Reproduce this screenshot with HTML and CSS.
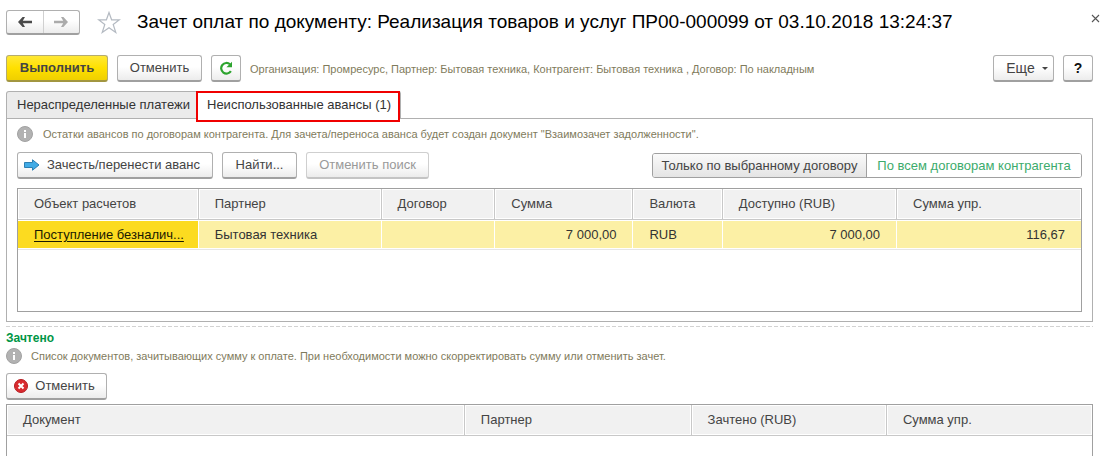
FILE: index.html
```html
<!DOCTYPE html>
<html lang="ru">
<head>
<meta charset="utf-8">
<title>Зачет оплат по документу</title>
<link rel="stylesheet" href="styles.css">
</head>
<body>
<main class="page">
  <header class="titlebar">
    <div class="nav">
      <button class="nav-btn" type="button" aria-label="Назад">
        <svg width="14" height="10" viewBox="0 0 14 10"><path d="M0 5 4.6 0H7L4.8 3.8H14V6.2H4.8L7 10H4.6Z" fill="#4a4a4a"/></svg>
      </button>
      <button class="nav-btn" type="button" aria-label="Вперед">
        <svg width="14" height="10" viewBox="0 0 14 10"><path d="M14 5 9.4 0H7L9.2 3.8H0V6.2H9.2L7 10H9.4Z" fill="#ababab"/></svg>
      </button>
    </div>
    <button class="plain star" type="button" aria-label="В избранное">
      <svg width="24" height="23" viewBox="0 0 24 23"><path d="M12 1.5 14.6 8.8H22.4L16.2 13.4 18.8 21.5 12 16.8 5.2 21.5 7.8 13.4 1.6 8.8H9.4Z" fill="#fff" stroke="#b4bac2" stroke-width="1.2"/></svg>
    </button>
    <h1 class="title">Зачет оплат по документу: Реализация товаров и услуг ПР00-000099 от 03.10.2018 13:24:37</h1>
    <button class="plain close" type="button" aria-label="Закрыть">
      <svg width="9" height="9" viewBox="0 0 9 9"><path d="M1 1 8 8M8 1 1 8" stroke="#555" stroke-width="1.1" fill="none"/></svg>
    </button>
  </header>

  <div class="toolbar">
    <button class="btn primary" type="button">Выполнить</button>
    <button class="btn cancel" type="button">Отменить</button>
    <button class="btn square" type="button" aria-label="Обновить">
      <svg width="14" height="14" viewBox="0 0 14 14"><path d="M11.9 10.2A5.3 5.3 0 1 1 11 3.3" fill="none" stroke="#2da42f" stroke-width="2.2"/><path d="M13 0.8V6.2H7.4Z" fill="#2da42f"/></svg>
    </button>
    <p class="note grow">Организация: Промресурс, Партнер: Бытовая техника, Контрагент: Бытовая техника , Договор: По накладным</p>
    <button class="btn more" type="button">Еще
      <svg width="6" height="3" viewBox="0 0 6 3"><path d="M0 0H6L3 3Z" fill="#444"/></svg>
    </button>
    <button class="btn square help" type="button">?</button>
  </div>

  <div class="tabs" role="tablist">
    <button class="tab" type="button" role="tab" aria-selected="false">Нераспределенные платежи</button>
    <button class="tab active" type="button" role="tab" aria-selected="true">Неиспользованные авансы (1)</button>
  </div>

  <section class="panel">
    <div class="hint">
      <svg width="16" height="16" viewBox="0 0 16 16"><circle cx="8" cy="8" r="7.5" fill="#b2b2b2" stroke="#a2a2a2"/><path d="M7 4H9V6H7ZM7 7H9V12H7Z" fill="#fff"/></svg>
      <p class="note">Остатки авансов по договорам контрагента. Для зачета/переноса аванса будет создан документ "Взаимозачет задолженности".</p>
    </div>
    <div class="commands">
      <button class="btn transfer" type="button">
        <svg width="16" height="12" viewBox="0 0 16 12"><path d="M0.5 3.5H8.5V0.8L15 6 8.5 11.2V8.5H0.5Z" fill="#41abe6" stroke="#2c7fb2"/></svg>
        Зачесть/перенести аванс
      </button>
      <button class="btn find" type="button">Найти...</button>
      <button class="btn reset" type="button" disabled>Отменить поиск</button>
      <div class="switch">
        <button class="option on" type="button" aria-pressed="true">Только по выбранному договору</button>
        <button class="option" type="button" aria-pressed="false">По всем договорам контрагента</button>
      </div>
    </div>
    <div class="grid-box advances">
      <table class="grid">
        <colgroup><col class="a1"><col class="a2"><col class="a3"><col class="a4"><col class="a5"><col class="a6"><col></colgroup>
        <thead>
          <tr><th>Объект расчетов</th><th>Партнер</th><th>Договор</th><th>Сумма</th><th>Валюта</th><th>Доступно (RUB)</th><th>Сумма упр.</th></tr>
        </thead>
        <tbody>
          <tr><td class="current"><a href="#">Поступление безналич...</a></td><td>Бытовая техника</td><td></td><td class="num">7 000,00</td><td>RUB</td><td class="num">7 000,00</td><td class="num">116,67</td></tr>
        </tbody>
      </table>
    </div>
  </section>

  <section class="offset">
    <svg class="divider" width="100%" height="1"><line x1="0" y1="0.5" x2="100%" y2="0.5" stroke="#d2d2d2" stroke-dasharray="4 2"/></svg>
    <h2 class="subtitle">Зачтено</h2>
    <div class="hint">
      <svg width="16" height="16" viewBox="0 0 16 16"><circle cx="8" cy="8" r="7.5" fill="#b2b2b2" stroke="#a2a2a2"/><path d="M7 4H9V6H7ZM7 7H9V12H7Z" fill="#fff"/></svg>
      <p class="note">Список документов, зачитывающих сумму к оплате. При необходимости можно скорректировать сумму или отменить зачет.</p>
    </div>
    <button class="btn undo" type="button">
      <svg width="14" height="14" viewBox="0 0 14 14"><circle cx="7" cy="7" r="6.5" fill="#d92b2f" stroke="#b51d22"/><path d="M4.5 4.5 9.5 9.5M9.5 4.5 4.5 9.5" stroke="#fff" stroke-width="2"/></svg>
      Отменить
    </button>
    <div class="grid-box documents">
      <table class="grid">
        <colgroup><col class="d1"><col class="d2"><col class="d3"><col></colgroup>
        <thead>
          <tr><th>Документ</th><th>Партнер</th><th>Зачтено (RUB)</th><th>Сумма упр.</th></tr>
        </thead>
      </table>
    </div>
  </section>
</main>
</body>
</html>
```
FILE: styles.css
```css
* { box-sizing: border-box; }

body {
  margin: 0;
  background: #fff;
  color: #444;
  font: 13px/16px "Liberation Sans", Arial, sans-serif;
}

button { font: inherit; color: inherit; margin: 0; cursor: pointer; }
svg { display: block; flex: none; }
p, h1, h2 { margin: 0; }

.page {
  display: flex;
  flex-direction: column;
  min-height: 100vh;
  padding: 9px 13px 0 6px;
}

.titlebar { display: flex; align-items: center; height: 26px; }

.nav {
  display: flex;
  width: 74px;
  height: 25px;
  border: 1px solid #b0b0b0;
  border-bottom: 2px solid #a0a0a0;
  border-radius: 3px;
  background: linear-gradient(#fff 40%, #ececec);
}
.nav-btn {
  display: flex;
  flex: 1;
  align-items: center;
  justify-content: center;
  padding: 0;
  border: 0;
  background: none;
}
.nav-btn + .nav-btn { border-left: 1px solid #d0d0d0; }

.plain { padding: 0; border: 0; background: none; }
.star { margin-left: 17px; }
.title {
  flex: 1;
  margin-left: 16px;
  color: #000;
  font-size: 19px;
  font-weight: 400;
  line-height: 26px;
  white-space: nowrap;
}
.close { align-self: flex-start; margin: 5px -7px 0 0; }

.toolbar { display: flex; align-items: center; gap: 9px; margin-top: 20px; }
.grow { flex: 1; }
.note { color: #7f7b5c; font-size: 11px; line-height: 16px; }

.btn {
  display: flex;
  flex: none;
  align-items: center;
  justify-content: center;
  height: 27px;
  padding: 0;
  border: 1px solid #b0b0b0;
  border-bottom: 2px solid #a0a0a0;
  border-radius: 3px;
  background: linear-gradient(#fff 45%, #ececec);
  white-space: nowrap;
}
.primary {
  width: 102px;
  border-color: #b5ac70 #b5ac70 #a29640;
  background: linear-gradient(#ffe836, #ffe000 50%, #efcf00);
  font-weight: 700;
}
.cancel { width: 85px; }
.square { width: 30px; }
.more { width: 61px; gap: 7px; padding-left: 7px; font-size: 14px; }
.help { color: #111; font-size: 14px; font-weight: 700; }
.transfer { width: 196px; gap: 7px; padding-right: 6px; }
.find { width: 75px; }
.reset { width: 123px; border-color: #cfcfcf #cfcfcf #c4c4c4; color: #999; }
.undo { width: 101px; gap: 7px; margin-top: 9px; padding-right: 4px; }

.tabs { display: flex; height: 27px; margin-top: 9px; }
.tab {
  position: relative;
  padding: 0 9px 0 10px;
  width: 191px;
  border: 1px solid #b0b0b0;
  border-bottom: 0;
  border-radius: 3px 0 0 0;
  background: #ebebeb;
  color: #333;
  text-align: left;
  white-space: nowrap;
}
.tab.active { width: 204px; border-left: 0; border-radius: 0 3px 0 0; background: #fff; }
.tab.active::after {
  content: "";
  position: absolute;
  inset: -1px 0 -4px -1px;
  border: 2px solid #f00000;
  background: linear-gradient(#fff, #fff) bottom / 100% 3px no-repeat;
}

.panel { padding: 7px 10px 9px; border: 1px solid #b0b0b0; }
.hint { display: flex; align-items: center; gap: 9px; }
.panel .hint { gap: 10px; }
.commands { display: flex; align-items: center; gap: 9px; margin-top: 10px; }

.switch {
  display: flex;
  height: 25px;
  margin-left: auto;
  border: 1px solid #a0a0a0;
  border-radius: 3px;
}
.option {
  width: 214px;
  padding: 0;
  border: 0;
  border-radius: 2px;
  background: #fff;
  color: #3cab6c;
  white-space: nowrap;
}
.option.on {
  border-right: 1px solid #a0a0a0;
  border-radius: 2px 0 0 2px;
  background: linear-gradient(#fafafa, #e4e4e4);
  color: #444;
}

.grid-box { border: 1px solid #a0a0a0; }
.advances { min-height: 124px; margin-top: 9px; }
.documents { flex: 1; margin-top: 4px; border-bottom: 0; }

.grid { width: 100%; border-collapse: separate; border-spacing: 0; table-layout: fixed; }
.grid th, .grid td { padding: 0 16px; overflow: hidden; text-align: left; white-space: nowrap; }
.grid th {
  height: 31px;
  border-right: 1px solid #c8c8c8;
  border-bottom: 1px solid #c8c8c8;
  background: #f1f1f1;
  box-shadow: inset 0 0 0 1px #fff;
  font-weight: 400;
}
.grid td {
  height: 29px;
  border: solid #fff;
  border-width: 1px 1px 1px 0;
  background: #fcf0a5;
  box-shadow: 0 1px #e6e6e6;
  color: #333;
}
.grid th:last-child, .grid td:last-child { border-right: 0; }
.grid td.current { background: #fcdb20; }
.grid td.num { text-align: right; }
.grid a { color: #1a1a00; text-underline-offset: 2px; }
.a1 { width: 17%; }
.a2 { width: 17.2%; }
.a3 { width: 10.7%; }
.a4 { width: 13%; }
.a5 { width: 8.4%; }
.a6 { width: 16.4%; }
.d1 { width: 42.2%; }
.d2 { width: 20.9%; }
.d3 { width: 18%; }

.offset { display: flex; flex: 1; flex-direction: column; padding-top: 4px; }
.subtitle { margin-top: 3px; color: #009646; font-size: 12px; line-height: 16px; }
.offset .hint { margin-top: 2px; }
```
